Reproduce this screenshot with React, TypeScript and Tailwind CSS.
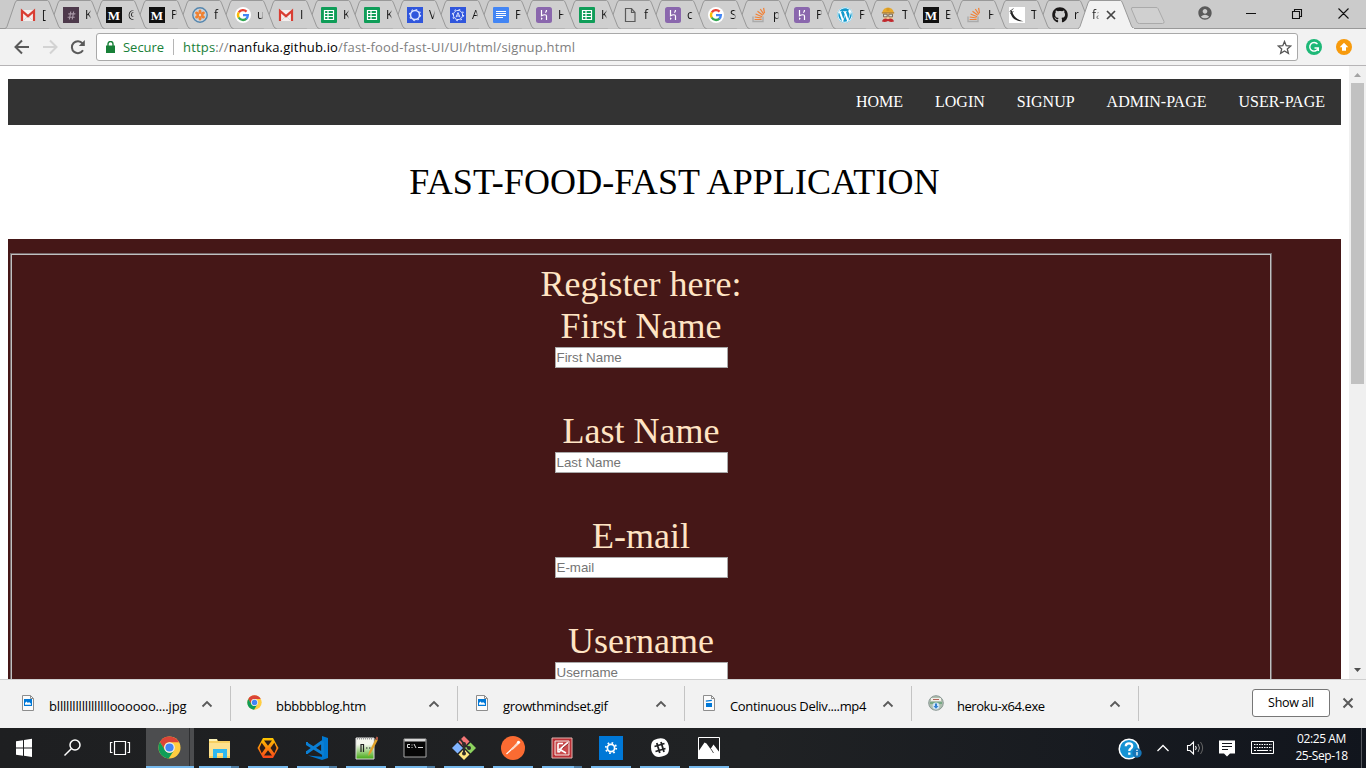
import React from "react";
import { FaWordpress, FaGithub, FaHashtag } from "react-icons/fa";
import { MdAccountCircle } from "react-icons/md";

const Gmail = () => (
  <svg width="16" height="16" viewBox="0 0 16 16">
    <path d="M1 3h14v11H1z" fill="#f4efee" />
    <path d="M2 14V4L8 9.200 14 4V14" fill="none" stroke="#d93e33" strokeWidth="2.2" />
    <path d="M4 13l3-3M12 13L9 10" stroke="#d6d0d0" strokeWidth=".8" />
  </svg>
);
const Slack = () => (
  <span className="flex h-4 w-4 items-center justify-center bg-[#4d394b] text-[9px] text-[#a898a7]">
    <FaHashtag />
  </span>
);
const Medium = () => (
  <span className="flex h-4 w-4 items-center justify-center bg-[#111] font-['Liberation_Serif',serif] text-[13px] leading-none font-bold text-white">
    M
  </span>
);
const OrangeBall = () => (
  <svg width="16" height="16" viewBox="0 0 16 16">
    <circle cx="8" cy="8" r="7.2" fill="#c9d3dc" stroke="#5586ad" strokeWidth="1.4" />
    <g fill="#f08232">
      {[0, 60, 120, 180, 240, 300].map((a) => (
        <ellipse key={a} cx="8" cy="4.8" rx="1.5" ry="2.3" transform={`rotate(${a} 8 8)`} />
      ))}
    </g>
    <circle cx="8" cy="8" r="1" fill="#f6dac4" />
  </svg>
);
const Google = () => (
  <svg width="16" height="16" viewBox="0 0 16 16">
    <circle cx="8" cy="8" r="8" fill="#fff" />
    <g fill="none" strokeWidth="2.3">
      <path d="M11.6 4.6A5 5 0 0 0 3.8 5.4" stroke="#ea4335" />
      <path d="M3.8 5.3a5 5 0 0 0 0 5.4" stroke="#fbbc05" />
      <path d="M3.7 10.5a5 5 0 0 0 7.8 1.1" stroke="#34a853" />
      <path d="M8 8.1h4.9a5 5 0 0 1-1.7 3.7" stroke="#4285f4" />
    </g>
  </svg>
);
const Sheets = () => (
  <svg width="16" height="16" viewBox="0 0 16 16">
    <rect width="16" height="16" rx="1" fill="#0f9d58" />
    <path d="M3.5 3.5h9v9h-9zM3.5 6.5h9M3.5 9.5h9M7 3.5v9" fill="none" stroke="#fff" strokeWidth="1.2" />
  </svg>
);
const BlueGear = ({ a = false }: { a?: boolean }) => (
  <svg width="16" height="16" viewBox="0 0 16 16">
    <rect width="16" height="16" fill="#3056dc" />
    <circle cx="8" cy="8" r={a ? 4.6 : 4.5} fill="none" stroke="#dce4ff" strokeWidth={a ? 1 : 1.5} />
    <circle cx="8" cy="8" r="5.6" fill="none" stroke="#dce4ff" strokeWidth="1.1" strokeDasharray="1.6 2.8" />
    {a && <path d="M6 10.3L8 5.6l2 4.7M6.8 9h2.4" fill="none" stroke="#dce4ff" />}
  </svg>
);
const Docs = () => (
  <svg width="16" height="16" viewBox="0 0 16 16">
    <rect width="16" height="16" rx="1" fill="#4285f4" />
    <path d="M3 4.5h10M3 6.5h10M3 8.5h10M3 10.5h7" stroke="#fff" />
  </svg>
);
const Heroku = () => (
  <svg width="16" height="16" viewBox="0 0 16 16">
    <rect width="16" height="16" rx="2.5" fill="#8a67ad" />
    <path d="M5.5 3v5.7C8 7.5 10.5 7.3 10.5 9v4M10.5 3c0 1.1-.4 2-1.1 2.7" fill="none" stroke="#fff" strokeWidth="1.2" />
    <path d="M5 10.3l1.8 1.4L5 13.1z" fill="#fff" />
  </svg>
);
const Page = () => (
  <svg width="16" height="16" viewBox="0 0 16 16">
    <path d="M3.5 1.5h6l3.5 4v9H3.5zM9.5 1.5v4H13" fill="none" stroke="#5a5a5a" strokeWidth="1.2" />
  </svg>
);
const Stack = () => (
  <svg width="16" height="16" viewBox="0 0 16 16">
    <path d="M2 9.5v5h10v-5" fill="none" stroke="#aaa" strokeWidth="1.3" />
    <g stroke="#f18136" strokeWidth="1.2">
      <path d="M3.6 12.5h7M3.7 10l6.9 1M4.6 7l6.5 2.7M6.5 4.2l5.3 4.1M9.3 2l3.6 5.4M12.6.8l.9 5.4" />
    </g>
  </svg>
);
const Wp = () => (
  <span className="flex h-4 w-4 items-center justify-center rounded-full bg-white text-[16px] text-[#1199cc]">
    <FaWordpress />
  </span>
);
const Travis = () => (
  <svg width="16" height="16" viewBox="0 0 16 16">
    <path d="M3 6h10.5l-.6 6H3.6z" fill="#eccb9b" />
    <path d="M2.2 5.5C3 2 5 .8 8 .8s5 1.4 5.8 4.7z" fill="#e8a92c" />
    <path d="M6.5.8h3V4h-3z" fill="#d99a22" />
    <path d="M1.8 5.2h12.4v1.3H1.8z" fill="#b5802b" />
    <path d="M3.5 7.2h3.7v2.6H3.5zM8.8 7.2h3.7v2.6H8.8z" fill="#dfe3dc" stroke="#5f5143" strokeWidth=".8" />
    <path d="M2 14.5c1-3.5 4-3.5 6-2.2 2-1.3 5-1.3 6 2.2-2 .8-4 .6-6-.4-2 1-4 1.2-6 .4z" fill="#c0282d" />
  </svg>
);
const Flask = () => (
  <svg width="16" height="16" viewBox="0 0 16 16">
    <rect width="16" height="16" fill="#fff" />
    <path d="M1.500 3C1 9 5 14.800 14.5 14.2 9.500 13.300 4.600 10.500 3 4z" fill="#222" />
    <path d="M.6 4.500L4.500 1.600M1 6.500l3.500-2" stroke="#333" strokeWidth=".8" />
  </svg>
);
const Github = () => (
  <span className="flex h-4 w-4 items-center justify-center text-[16px] text-[#191717]">
    <FaGithub />
  </span>
);
const Chrome = ({ size }: { size: number }) => (
  <svg width={size} height={size} viewBox="0 0 24 24">
    <circle cx="12" cy="12" r="11.500" fill="#ffcd40" />
    <path d="M2 6.300A11.500 11.500 0 0 1 22 6.500H12A5.500 5.500 0 0 0 7 14.600z" fill="#db4437" />
    <path d="M2 6.300A11.500 11.500 0 0 0 11.200 23.500L16.700 14.800A5.500 5.500 0 0 1 7.200 14.700z" fill="#0f9d58" />
    <circle cx="12" cy="12" r="5.500" fill="#f1f1f1" />
    <circle cx="12" cy="12" r="4.300" fill="#4285f4" />
  </svg>
);

const tabs: [React.ReactNode, string][] = [
  [<Gmail />, "["], [<Slack />, "K"], [<Medium />, "@"], [<Medium />, "P"], [<OrangeBall />, "f"],
  [<Google />, "u"], [<Gmail />, "I"], [<Sheets />, "K"], [<Sheets />, "K"], [<BlueGear />, "V"],
  [<BlueGear a />, "A"], [<Docs />, "F"], [<Heroku />, "H"], [<Sheets />, "K"], [<Page />, "f"],
  [<Heroku />, "c"], [<Google />, "S"], [<Stack />, "p"], [<Heroku />, "P"], [<Wp />, "F"],
  [<Travis />, "T"], [<Medium />, "E"], [<Stack />, "H"], [<Flask />, "T"], [<Github />, "r"],
];

const TabShape = ({ active = false }: { active?: boolean }) => (
  <svg className="absolute top-0 left-0" width="60" height="29" viewBox="0 0 60 29">
    <path
      d="M0 28.500Q1.500 28 2 26.500L10 3Q11 .500 12 .500H42.500Q43.500 .500 44.500 3L53.500 26Q54.500 28.500 56.500 28.500"
      fill={active ? "#f2f2f2" : "#cfcfcf"}
      stroke="#999"
    />
    {active && <path d="M1 28.500h55" stroke="#f2f2f2" strokeWidth="1.200" />}
  </svg>
);

const TabStrip = () => (
  <div className="relative flex h-[29px] border-b border-[#999] bg-[#cbcbcb] pl-[5px]">
    {tabs.map(([icon, label], i) => (
      <div key={i} className="relative h-[28px] w-[43px] shrink-0" style={{ zIndex: 30 - i }}>
        <TabShape />
        <div className="relative flex w-[46px] items-center gap-[6px] pt-[7px] pl-[15px]">
          <span className="block h-4 w-4 shrink-0">{icon}</span>
          <span className="w-[6px] overflow-hidden bg-linear-to-r from-[#111] from-60% to-[#bbb] bg-clip-text text-[12px] leading-4 whitespace-nowrap text-transparent">
            {label}
          </span>
        </div>
      </div>
    ))}
    <div className="relative z-40 -ml-[2px] flex h-[29px] w-[58px] shrink-0">
      <TabShape active />
      <div className="relative flex items-center gap-[7px] pl-[14px]">
        <span className="w-[7px] overflow-hidden bg-linear-to-r from-[#222] from-50% to-[#bbb] bg-clip-text text-[12px] leading-4 whitespace-nowrap text-transparent">
          fa
        </span>
        <svg width="10" height="10" viewBox="0 0 10 10">
          <path d="M1 1l8 8M9 1L1 9" stroke="#444" strokeWidth="1.700" />
        </svg>
      </div>
    </div>
    <svg className="mt-[6px] -ml-[6px] shrink-0" width="36" height="19" viewBox="0 0 36 19">
      <path d="M2 1.500h24q1.500 0 2 1l6 13q.5 2-1.500 2h-23q-2 0-2.600-1.500l-5.500-13Q1 1.500 3 1.500z" fill="#d0d0d0" stroke="#aaa" />
    </svg>
    <div className="ml-[32px] flex items-start">
      <MdAccountCircle className="mt-[5px] -ml-px h-4 w-4 shrink-0 text-[#5a5a5a]" />
    </div>
    <svg className="mt-[8px] ml-[33px] shrink-0" width="104" height="11" viewBox="0 0 104 11">
      <path d="M0 5.500h10M46.500 3.500h7v7h-7zM48.500 3.500v-2h7v7h-2M92.500.500l10 10M102.500.500l-10 10" fill="none" stroke="#111" strokeWidth="1.100" />
    </svg>
  </div>
);

const Toolbar = () => (
  <div className="flex h-[37px] items-center border-b border-[#b6b4b6] bg-[#f2f2f2] pl-[14px]">
    <svg width="72" height="16" viewBox="0 0 72 16" fill="none" strokeWidth="2">
      <path d="M15 8H2M8 1.500L1.500 8 8 14.500" stroke="#5a5a5a" />
      <path d="M29 8h13M36 1.500L42.500 8 36 14.500" stroke="#d3d3d3" />
      <path d="M69 11.300A6 6 0 1 1 68.500 4.300" stroke="#5a5a5a" />
      <path d="M70.800 1v6h-6z" fill="#5a5a5a" />
    </svg>
    <div className="ml-[10px] flex h-[28px] w-[1202px] items-center rounded-[3px] border border-[#a9a9a9] bg-white pl-[9px] text-[13px]">
      <svg width="9" height="12" viewBox="0 0 9 12">
        <path d="M0 4.500h9V12H0z" fill="#188038" />
        <path d="M2 5V3a2.500 2.500 0 0 1 5 0v2" fill="none" stroke="#188038" strokeWidth="1.400" />
      </svg>
      <span className="ml-[8px] w-[42px] pt-px whitespace-nowrap tracking-[-0.02px] text-[#188038]">Secure</span>
      <span className="ml-[8px] h-4 w-px bg-[#b5b5b5]" />
      <span className="ml-[9px] grow pt-px tracking-[0.175px] whitespace-nowrap text-[#808080]">
        <span className="text-[#188038]">https</span>://<span className="text-black">nanfuka.github.io</span>
        /fast-food-fast-UI/UI/html/signup.html
      </span>
      <svg className="mr-[5px]" width="15" height="15" viewBox="0 0 15 15">
        <path d="M7.500 1.500l1.700 4.200 4.600.3-3.500 2.900 1.100 4.400-3.900-2.400-3.900 2.400 1.100-4.400L1.200 6l4.600-.3z" fill="none" stroke="#555" strokeWidth="1.300" />
      </svg>
    </div>
    <svg className="ml-[8px]" width="46" height="16" viewBox="0 0 46 16">
      <circle cx="8" cy="8" r="8" fill="#1db877" />
      <path d="M11.500 5.200A4.300 4.300 0 1 0 12.200 9H8.500M12.300 8.500v3.500" fill="none" stroke="#fff" strokeWidth="1.400" />
      <circle cx="38" cy="8" r="8" fill="#f79a0c" />
      <path d="M38 3.800l4.300 4.500h-2.300v3.400h-4V8.300h-2.300z" fill="#fff" />
    </svg>
  </div>
);

const fields = ["First Name", "Last Name", "E-mail", "Username"];

const WebPage = () => (
  <div className="flex h-[613px] overflow-hidden bg-white font-['Liberation_Serif',serif]">
    <main className="w-[1349px] px-[8px] pt-[13px]">
      <nav className="flex h-[46px] items-center justify-end bg-[#333] text-[16px] text-white">
        {["HOME", "LOGIN", "SIGNUP", "ADMIN-PAGE", "USER-PAGE"].map((n) => (
          <a key={n} className="px-[16px]">{n}</a>
        ))}
      </nav>
      <h1 className="flex h-[114px] items-center justify-center text-[36px] leading-[42px] tracking-[0.1px] text-black">
        FAST-FOOD-FAST APPLICATION
      </h1>
      <div className="h-[700px] bg-[#451717] pt-[14px] pl-[2px] text-[36px] leading-[42px] text-[#ffe4c4]">
        <div className="h-[680px] w-[1262px] border border-[#77686a]">
          <div className="flex h-full flex-col items-center border border-[#c0c0c0] pt-[8px]">
            <div>Register here:</div>
            {fields.map((f) => (
              <label key={f} className="flex h-[105px] flex-col items-center">
                <span>{f}</span>
                <input
                  placeholder={f}
                  className="h-[21px] w-[173px] border border-[#a9a9a9] bg-white px-px font-['Liberation_Sans',sans-serif] text-[13.33px] leading-[17px] placeholder:text-[#757575]"
                />
              </label>
            ))}
          </div>
        </div>
      </div>
    </main>
    <div className="flex w-[17px] flex-col items-center bg-[#f0f0f0]">
      <svg className="shrink-0" width="17" height="17" viewBox="0 0 17 17">
        <path d="M5 11l3.500-4L12 11z" fill="#a3a3a3" />
      </svg>
      <div className="h-[301px] w-[13px] bg-[#c1c1c1]" />
      <svg className="mt-auto" width="17" height="17" viewBox="0 0 17 17">
        <path d="M5 6l3.500 4L12 6z" fill="#505050" />
      </svg>
    </div>
  </div>
);

const FileIcon = ({ video = false }: { video?: boolean }) => (
  <svg width="16" height="16" viewBox="0 0 16 16">
    <path d="M2.500.500h8l3 3v12h-11z" fill="#fbfbfb" stroke="#8d8d8d" />
    <path d="M10.500.500v3h3" fill="none" stroke="#8d8d8d" />
    {video ? (
      <path d="M5 8h6v4H5zM4.800 5.500l6-.8.1 1.300-6 .8z" fill="#0078d7" />
    ) : (
      <>
        <path d="M4 4h8v7H4z" fill="#0078d7" />
        <path d="M5 9.800V8l1.500-1.500L8 8l1-1 2 1.800v1z" fill="#fff" />
      </>
    )}
  </svg>
);
const Installer = () => (
  <svg width="16" height="16" viewBox="0 0 16 16">
    <circle cx="8" cy="8" r="7.300" fill="#aebfae" stroke="#8b9895" />
    <path d="M3 3h10v3H3z" fill="#f2eee9" />
    <path d="M5 4.500h6" stroke="#b0655a" />
    <path d="M2 7h12v2H2z" fill="#76a884" />
    <circle cx="8" cy="11" r="3.400" fill="#cfe5f4" />
    <path d="M7 8.500h2V11h1.500L8 13.800 5.500 11H7z" fill="#2f7fd0" />
  </svg>
);

const downloads: [React.ReactNode, string, string][] = [
  [<FileIcon />, "bllllllllllllllllloooooo....jpg", "tracking-[-0.17px]"],
  [<Chrome size={15} />, "bbbbbblog.htm", "tracking-[-0.3px]"],
  [<FileIcon />, "growthmindset.gif", "tracking-[-0.35px]"],
  [<FileIcon video />, "Continuous Deliv....mp4", "tracking-[-0.35px]"],
  [<Installer />, "heroku-x64.exe", "tracking-[-0.45px]"],
];

const Downloads = () => (
  <div className="flex h-[49px] border-t border-[#cfcfcf] bg-[#f2f2f2]">
    {downloads.map(([icon, name, spacing], i) => (
      <div key={i} className="flex w-[227px] shrink-0 pt-[6px] first:w-[231px] first:pl-[4px]">
        <div className="flex h-[35px] w-full border-r border-[#c4c4c4] pl-[16px]">
          <span className="mt-[9px] flex w-4 shrink-0">{icon}</span>
          <span className={`mt-[11px] ml-[13px] w-[140px] text-[13px] leading-[18px] whitespace-nowrap text-black ${spacing}`}>{name}</span>
          <svg className="mt-[14px] ml-[12px] shrink-0" width="12" height="8" viewBox="0 0 12 8">
            <path d="M1.500 6.500L6 2l4.500 4.500" fill="none" stroke="#5a5a5a" strokeWidth="1.800" />
          </svg>
        </div>
      </div>
    ))}
    <div className="mt-[9px] ml-auto flex h-[28px] w-[78px] items-center justify-center rounded-[3px] border border-[#777] bg-white text-[12.5px] tracking-[-0.3px] text-black">
      Show all
    </div>
    <svg className="mt-[17px] mr-[12px] ml-[12px]" width="12" height="12" viewBox="0 0 12 12">
      <path d="M1.500 1.500l9 9M10.500 1.500l-9 9" stroke="#5a5a5a" strokeWidth="2" />
    </svg>
  </div>
);

const apps: [React.ReactNode, boolean][] = [
  [
    <svg width="24" height="24" viewBox="0 0 24 24">
      <path d="M2 3h8l1 2h12v17H2z" fill="#f6cf61" />
      <path d="M2 3h8v2H2z" fill="#fbf2b8" />
      <path d="M2 7h21v13H2z" fill="#fde18e" />
      <path d="M6 22v-9h14v9h-4v-5h-6v5z" fill="#2fb8f0" />
    </svg>,
    true,
  ],
  [
    <svg width="24" height="24" viewBox="0 0 24 24">
      <defs>
        <linearGradient id="hex" x2="0" y2="1"><stop stopColor="#fdc800" /><stop offset="1" stopColor="#f9441a" /></linearGradient>
      </defs>
      <path d="M7 2h10l5.500 10L17 22H7L1.500 12z" fill="url(#hex)" />
      <path d="M8 4.500h8l-4 5.200zM8 19.500h8l-4-5.200zM5.700 6.700L9.500 12l-3.800 5.300L3.500 12zM18.300 6.700L14.500 12l3.800 5.300 2.200-5.300z" fill="#2a1c18" />
    </svg>,
    false,
  ],
  [
    <svg width="26" height="26" viewBox="0 0 26 26">
      <path d="M18 1l6 2v20l-6 2L4 20.500l14 1.300z" fill="#0078d0" />
      <path d="M18.500 6.500v12L3 9M18.500 6.500L3 17.500" fill="none" stroke="#0b7fd4" strokeWidth="2.800" />
      <path d="M3 7v3M3 16v3" stroke="#0b7fd4" strokeWidth="2" />
    </svg>,
    true,
  ],
  [
    <svg width="24" height="24" viewBox="0 0 24 24">
      <defs><linearGradient id="np" x2="0" y2="1"><stop offset=".3" stopColor="#f5f7ee" /><stop offset="1" stopColor="#43a811" /></linearGradient></defs>
      <path d="M2 2h18v21H2z" fill="url(#np)" stroke="#d9d9d9" />
      <path d="M3 2.500h16" stroke="#999" strokeWidth="2" strokeDasharray="1 1" />
      <path d="M7 8v8M7 8.500h2.500V16M12 12h1.500M15 12h1.500" stroke="#222" strokeWidth="1.200" fill="none" />
      <path d="M14 20l1-4L21.500 3l2.200 1.200L17 17z" fill="#e0a129" />
      <path d="M21.500 3L22.500.500l2 1-.8 2.700z" fill="#b55844" />
    </svg>,
    false,
  ],
  [
    <svg width="24" height="24" viewBox="0 0 24 24">
      <path d="M1 3h22v18H1z" fill="#060606" stroke="#a6a6a6" />
      <path d="M1.500 3h21v2.500h-21z" fill="#d8d8d8" />
      <path d="M7 8.500H4.500v3H7M9 8.500v1M9 11v1M11 8l2 4M15 11.500h5" fill="none" stroke="#ddd" />
    </svg>,
    true,
  ],
  [
    <svg width="26" height="26" viewBox="0 0 26 26">
      <path d="M13 1l5.500 5.500L13 12 7.500 6.500z" fill="#f37676" />
      <path d="M6.500 7.500L12 13l-5.500 5.500L1 13z" fill="#80b3ff" />
      <path d="M19.500 7.500L25 13l-5.500 5.500L14 13z" fill="#8dd35f" />
      <path d="M13 14l5.500 5.500L13 25l-5.500-5.500z" fill="#ffe680" />
      <path d="M9 4l4 5v10M13 9.500l5 3.500" fill="none" stroke="#302d2c" strokeWidth="2" />
      <circle cx="13" cy="9" r="2" fill="#302d2c" /><circle cx="13" cy="18.500" r="2" fill="#302d2c" /><circle cx="18" cy="13" r="2" fill="#302d2c" />
    </svg>,
    false,
  ],
  [
    <svg width="24" height="24" viewBox="0 0 24 24">
      <circle cx="12" cy="12" r="12" fill="#fa6b32" />
      <path d="M5.500 18l7-6.500" stroke="#fff" strokeWidth="1.200" />
      <path d="M9.500 13.500l6-6.500q2.500-1.500 2.500 1l-6 5.500-2 .5z" fill="#fbd9c8" />
      <circle cx="17.500" cy="6.300" r="1.600" fill="#fff" />
    </svg>,
    false,
  ],
  [
    <svg width="24" height="24" viewBox="0 0 24 24">
      <path d="M2 2h20v20H2z" fill="#b92f35" stroke="#e1b5b0" />
      <path d="M5 5h14v14H5z" fill="#c94a4c" stroke="#f2e6e1" />
      <path d="M8 7.500v9M8 7.500h5M9 13l7 4M8.500 16.500l3-3" fill="none" stroke="#fff" strokeWidth="1.600" />
      <path d="M10.500 13L18 6.500" stroke="#fff" strokeWidth="2" />
      <path d="M12.500 12.500L18.500 7.500" stroke="#8b2022" strokeWidth="1" />
    </svg>,
    true,
  ],
  [
    <svg width="24" height="24" viewBox="0 0 24 24">
      <path d="M0 0h24v24H0z" fill="#0078d7" />
      <circle cx="12" cy="12" r="3.600" fill="none" stroke="#fff" strokeWidth="1.700" />
      <circle cx="12" cy="12" r="5.200" fill="none" stroke="#fff" strokeWidth="1.800" strokeDasharray="1.640 2.440" />
    </svg>,
    false,
  ],
  [
    <svg width="22" height="22" viewBox="0 0 22 22">
      <path d="M5 3q6-3 10.500-1 4.500 3 4.500 10 0 5-4 6.500-6 2.500-10 .5-4-3-4-9Q2 5 5 3z" fill="#fff" />
      <path d="M7.800 6l3 10M12 5l3 10M5.500 9.500l10-3M6.500 14.500l10-3" stroke="#1f2022" strokeWidth="1.800" />
    </svg>,
    false,
  ],
  [
    <svg width="24" height="24" viewBox="0 0 24 24">
      <path d="M1.500 1.500h21v21h-21z" fill="#1f2022" stroke="#fff" />
      <path d="M1 16l6.500-9.500 2 1 4 5.500 3-4.500 6.500 8.500v6H1z" fill="#fff" />
      <path d="M14 13l2.500 4" stroke="#555" />
    </svg>,
    false,
  ],
];

const Taskbar = () => (
  <div className="flex h-[40px] bg-linear-to-r from-[#1e1f21] via-[#202224] via-55% to-[#11151d] text-white">
    <svg className="shrink-0" width="146" height="40" viewBox="0 0 146 40">
      <path d="M16 13.200l7-1V19.500h-7zM24 12l8-1.200v8.700h-8zM16 20.500h7v7.200l-7-1zM24 20.500h8V29l-8-1.200z" fill="#fff" />
      <g fill="none" stroke="#fff" strokeWidth="1.500">
        <circle cx="75" cy="17" r="5" />
        <path d="M71.300 20.800L64.500 27.500" />
        <path d="M114.500 13.500h11v13h-11zM112.500 14.500h-2v10h2M127.500 14.500h2v10h-2" strokeWidth="1.200" />
      </g>
    </svg>
    <div className="flex h-full w-[48px] shrink-0 border-b-2 border-[#76b9ed] bg-[#4c4d4f]">
      <div className="flex w-[44px] items-center justify-center border-r border-[#2e2f31] pt-[1px] pl-[3px]">
        <Chrome size={23} />
      </div>
    </div>
    <div className="ml-[5px] flex gap-[9px]">
      {apps.map(([icon, multi], i) => (
        <div key={i} className="relative flex h-full w-[40px] flex-col items-center">
          <div className="flex h-[38px] items-center pt-[2px]">{icon}</div>
          <div className="flex h-[2px] w-full bg-[#76b9ed]">{multi && <span className="ml-auto h-full w-[8px] bg-[#4f7da3]" />}</div>
        </div>
      ))}
    </div>
    <svg className="ml-auto shrink-0" width="166" height="40" viewBox="1114 0 166 40">
      <circle cx="1129" cy="21" r="9.800" fill="#1593d4" stroke="#fff" strokeWidth="1.500" />
      <path d="M1125.800 18.300q0-3 3.200-3t3.200 2.700q0 1.700-1.700 2.700-1.200.8-1.200 2.300M1129.300 24.500v2.300" fill="none" stroke="#fff" strokeWidth="2.300" />
      <circle cx="1137" cy="25" r="4.700" fill="#1676b8" />
      <path d="M1137 24v3.500M1137 21.800v1.300" stroke="#fff" strokeWidth="1.300" />
      <g fill="none" stroke="#fff" strokeWidth="1.300">
        <path d="M1157.500 23l5.500-5.500 5.500 5.500" />
        <path d="M1187.500 17.500h2.500l3.500-3.500v12l-3.500-3.500h-2.500zM1195.500 18q1.500 2 0 4" strokeWidth="1.100" />
        <path d="M1198 16q3 4 0 8" stroke="#999" strokeWidth="1" />
        <path d="M1200.500 14q4.300 6 0 12" stroke="#666" strokeWidth="1" />
      </g>
      <path d="M1219 12.500h16v13h-5l-3 3-3-3h-5z" fill="#fff" />
      <path d="M1222 15.500h10M1222 18.500h10M1222 21.500h6" stroke="#15181e" strokeWidth="1.100" />
      <path d="M1251.500 13.500h22v12h-22z" fill="none" stroke="#fff" />
      <path d="M1254 16.500h18M1254 19.500h18" stroke="#fff" strokeDasharray="1.500 1" />
      <path d="M1254 22.500h2M1257 22.500h11M1269.500 22.500h2" stroke="#fff" />
    </svg>
    <div className="ml-[14px] flex w-[55px] shrink-0 flex-col items-center pt-[2px] text-[12px] leading-[17px] tracking-[-0.4px] whitespace-nowrap">
      <span>02:25 AM</span>
      <span>25-Sep-18</span>
    </div>
    <div className="mr-[4px] ml-[12px] w-px bg-[#55585e]" />
  </div>
);

export default function App() {
  return (
    <div className="flex h-[768px] w-[1366px] flex-col overflow-hidden bg-white font-['Open_Sans','Noto_Sans',sans-serif]">
      <TabStrip />
      <Toolbar />
      <WebPage />
      <Downloads />
      <Taskbar />
    </div>
  );
}
